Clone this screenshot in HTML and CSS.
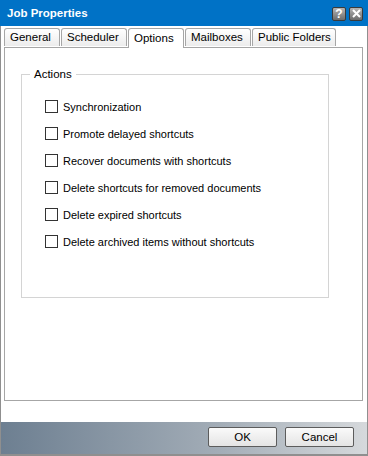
FILE: index.html
```html
<!DOCTYPE html>
<html lang="en">
<head>
    <meta charset="UTF-8">
    <title>Job Properties</title>
    <link rel="stylesheet" href="styles.css">
</head>
<body>
    <div class="window">
        <div class="titlebar">
            <span class="title">Job Properties</span>
            <div class="title-buttons">
                <span class="tbtn">?</span>
                <span class="tbtn">
                    <svg width="9" height="9" viewBox="0 0 9 9"><path d="M1 1 L8 8 M8 1 L1 8" stroke="#fff" stroke-width="2"/></svg>
                </span>
            </div>
        </div>

        <div class="body">
            <div class="tabs">
                <div class="tab t-general">General</div>
                <div class="tab t-scheduler">Scheduler</div>
                <div class="tab t-options active">Options</div>
                <div class="tab t-mailboxes">Mailboxes</div>
                <div class="tab t-public">Public Folders</div>
            </div>
            <div class="panel">
                <fieldset class="group">
                    <legend>Actions</legend>
                    <label class="check"><span class="box"></span>Synchronization</label>
                    <label class="check"><span class="box"></span>Promote delayed shortcuts</label>
                    <label class="check"><span class="box"></span>Recover documents with shortcuts</label>
                    <label class="check"><span class="box"></span>Delete shortcuts for removed documents</label>
                    <label class="check"><span class="box"></span>Delete expired shortcuts</label>
                    <label class="check"><span class="box"></span>Delete archived items without shortcuts</label>
                </fieldset>
            </div>
        </div>

        <div class="footer">
            <button class="btn">OK</button>
            <button class="btn">Cancel</button>
        </div>
    </div>
</body>
</html>
```

FILE: styles.css
```css
* {
    margin: 0;
    padding: 0;
    box-sizing: border-box;
}

body {
    width: 368px;
    height: 456px;
    font-family: Tahoma, "Liberation Sans", Arial, sans-serif;
    font-size: 11px;
    color: #000;
    background: #fff;
}

.window {
    width: 368px;
    height: 456px;
    display: flex;
    flex-direction: column;
    border: 1px solid #8f8f8f;
    border-top: none;
    background: #fff;
}

.titlebar {
    height: 26px;
    margin: 0 -1px;
    background: #0072c6;
    display: flex;
    align-items: center;
    justify-content: space-between;
    padding: 0 5px 0 7px;
}

.title {
    color: #fff;
    font-family: "Liberation Sans", Arial, sans-serif;
    font-weight: bold;
    font-size: 11.5px;
}

.title-buttons {
    display: flex;
    gap: 3px;
    margin-top: 1px;
}

.tbtn {
    width: 14px;
    height: 14px;
    border: 1px solid #3a3a3a;
    border-radius: 2px;
    background: linear-gradient(#b4b4b4, #6c6c6c);
    color: #fff;
    font-family: "Liberation Sans", Arial, sans-serif;
    font-weight: bold;
    font-size: 12px;
    line-height: 12px;
    display: flex;
    align-items: center;
    justify-content: center;
}

.body {
    flex: 1;
    padding: 1px 3px 21px 3px;
    display: flex;
    flex-direction: column;
}

.tabs {
    display: flex;
    align-items: flex-end;
    gap: 1px;
    height: 20px;
    position: relative;
    z-index: 1;
}

.tab {
    height: 18px;
    border: 1px solid #a6a6a6;
    border-bottom: none;
    border-radius: 3px 3px 0 0;
    background: linear-gradient(#ffffff, #ececec);
    font-size: 11.5px;
    line-height: 16px;
    padding-left: 5px;
    margin-bottom: 1px;
}

.tab.active {
    height: 20px;
    background: #fff;
    margin-bottom: -1px;
    line-height: 19px;
}

.t-general { width: 56px; }
.t-scheduler { width: 66px; }
.t-options { width: 56px; }
.t-mailboxes { width: 66px; }
.t-public { width: 84px; }

.panel {
    flex: 1;
    border: 1px solid #a6a6a6;
    margin-right: 1px;
    padding: 20px 33px 0 16px;
}

.group {
    height: 230px;
    border: 1px solid #d4d4d4;
    padding: 13px 0 0 23px;
    display: flex;
    flex-direction: column;
}

.group legend {
    margin-left: -15px;
    padding: 0 4px;
    font-size: 11.5px;
}

.check {
    display: flex;
    align-items: center;
    gap: 5px;
    height: 27px;
    font-size: 11px;
}

.box {
    width: 13px;
    height: 13px;
    border: 1px solid #333;
    background: #fff;
}

.footer {
    height: 33px;
    margin: 0 -1px;
    border: 1px solid #8f8f8f;
    border-top: none;
    background: linear-gradient(to right, #6d7f91, #a3adb7 60%, #d6d9dc);
    display: flex;
    justify-content: flex-end;
    align-items: center;
    gap: 8px;
    padding: 0 13px 2px 0;
}

.btn {
    width: 69px;
    height: 20px;
    border: 1px solid #5c5c5c;
    border-radius: 2px;
    background: linear-gradient(#fafafa, #e4e4e4);
    font-family: "Liberation Sans", Arial, sans-serif;
    font-size: 11.5px;
    color: #000;
}
```
